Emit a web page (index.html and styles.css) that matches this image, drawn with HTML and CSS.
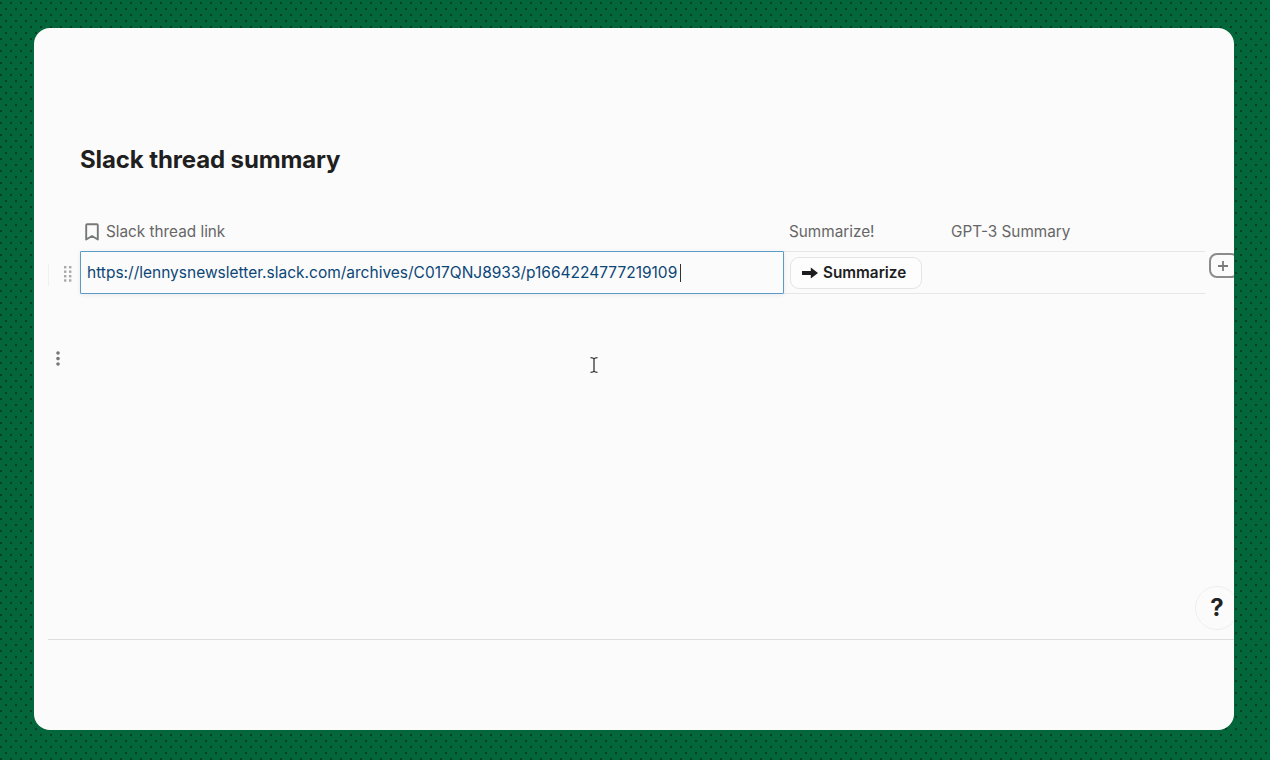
FILE: index.html
```html
<!DOCTYPE html>
<html lang="en">
<head>
<meta charset="utf-8">
<title>Slack thread summary</title>
<link rel="stylesheet" href="styles.css">
</head>
<body>
<main class="card">
  <section class="doc">
    <h1 class="title">Slack thread summary</h1>
    <div class="table">
      <div class="head">
        <div class="col col-link head-link">
          <svg class="bookmark" viewBox="0 0 14 18" width="14" height="18" aria-hidden="true"><path d="M2.2 1.2h9.6a1 1 0 0 1 1 1v14.3L7 13 1.2 16.5V2.2a1 1 0 0 1 1-1z" fill="none" stroke="#77787a" stroke-width="1.9" stroke-linejoin="round"/></svg>
          <span>Slack thread link</span>
        </div>
        <div class="col col-btn head-btn">Summarize!</div>
        <div class="col col-sum">GPT-3 Summary</div>
      </div>
      <div class="row">
        <div class="col col-link cell-link"><span class="url">https://lennysnewsletter.slack.com/archives/C017QNJ8933/p1664224777219109</span><span class="caret"></span></div>
        <div class="col col-btn cell-btn">
          <button class="btn" type="button"><svg class="arrow" viewBox="0 0 16 12" width="16" height="12" aria-hidden="true"><path d="M0 3.9h8.8V.4L16 6l-7.2 5.6V8.1H0z" fill="#1d1d1f"/></svg>Summarize</button>
        </div>
        <div class="col col-sum"></div>
      </div>
      <svg class="grip" viewBox="0 0 8 16" width="8" height="16" aria-hidden="true"><g fill="#a9a9a9"><rect x="0" y="0" width="2.4" height="2.4"/><rect x="5" y="0" width="2.4" height="2.4"/><rect x="0" y="4.5" width="2.4" height="2.4"/><rect x="5" y="4.5" width="2.4" height="2.4"/><rect x="0" y="9" width="2.4" height="2.4"/><rect x="5" y="9" width="2.4" height="2.4"/><rect x="0" y="13.3" width="2.4" height="2.4"/><rect x="5" y="13.3" width="2.4" height="2.4"/></g></svg>
      <span class="row-tick"></span>
    </div>
  </section>
  <div class="footer"></div>
  <div class="add" aria-hidden="true"><svg viewBox="0 0 12 12" width="12" height="12"><path d="M6 1v10M1 6h10" stroke="#7b7b7b" stroke-width="1.8" fill="none"/></svg></div>
  <svg class="kebab" viewBox="0 0 4 16" width="4" height="16" aria-hidden="true"><g fill="#777"><circle cx="2" cy="2" r="1.8"/><circle cx="2" cy="7.6" r="1.8"/><circle cx="2" cy="13" r="1.8"/></g></svg>
  <svg class="ibeam" viewBox="0 0 8 16" width="8" height="16" aria-hidden="true"><path d="M0.5 0.7c1.5 0 3 .3 3.5 1.3.5-1 2-1.3 3.5-1.3M4 2v12M0.5 15.3c1.5 0 3-.3 3.5-1.3.5 1 2 1.3 3.5 1.3" fill="none" stroke="#333" stroke-width="1.3"/></svg>
  <div class="help">?</div>
</main>
</body>
</html>
```

FILE: styles.css
```css
* { box-sizing: border-box; }
html, body { margin: 0; height: 100%; }
body {
  width: 1270px;
  height: 760px;
  overflow: hidden;
  padding: 28px 36px 30px 34px;
  font-family: Inter, "Liberation Sans", sans-serif;
  background-color: #04673b;
  background-image:
    radial-gradient(circle at 1px 1px, #02130b 0.6px, transparent 0.8px),
    radial-gradient(circle at 1px 1px, #02130b 0.6px, transparent 0.8px);
  background-size: 10px 12px, 10px 12px;
  background-position: 0 2px, 5px 8px;
}
.card {
  position: relative;
  width: 1200px;
  height: 702px;
  background: #fbfbfb;
  border-radius: 16px;
  overflow: hidden;
}
.doc { padding: 116px 29px 0 46px; height: 611px; }
.title {
  margin: 0;
  font-size: 24px;
  line-height: 32px;
  font-weight: 700;
  letter-spacing: -0.12px;
  color: #1f1f1f;
}
.table { position: relative; margin-top: 44px; }
.head {
  display: flex;
  height: 32px;
  font-size: 15.3px;
  line-height: 24px;
  color: #666666;
  border-bottom: 1px solid #e6e6e6;
}
.col-link { width: 704px; flex: none; }
.col-btn { width: 161px; flex: none; }
.col-sum { flex: 1; }
.head-link { display: flex; align-items: center; gap: 7px; padding: 0 0 8px 5px; }
.bookmark { flex: none; margin-top: 1px; }
.head-btn { padding-left: 5px; }
.head .col-sum { padding-left: 6px; }
.row {
  display: flex;
  height: 42px;
  border-bottom: 1px solid #e6e6e6;
}
.cell-link {
  display: flex;
  align-items: center;
  height: 43px;
  margin-top: -1px;
  padding-left: 6px;
  border: 1px solid #5a9bc8;
  border-radius: 1px;
  box-shadow: 0 1px 4px rgba(0, 0, 0, 0.08);
  background: #fbfbfb;
  font-size: 15.5px;
  color: #0b4677;
  position: relative;
  z-index: 1;
}
.url { white-space: nowrap; }
.caret { width: 1px; height: 18px; margin-left: 3px; background: #333; }
.cell-btn { display: flex; align-items: center; padding-left: 6px; }
.btn {
  display: flex;
  align-items: center;
  gap: 5px;
  width: 132px;
  height: 32px;
  padding: 0 0 0 11px;
  border: 1px solid #e4e4e4;
  border-radius: 9px;
  background: #fdfdfd;
  font-family: inherit;
  font-size: 15.3px;
  font-weight: 600;
  color: #1d1d1f;
}
.arrow { flex: none; }
.grip { position: absolute; left: -16px; top: 46px; }
.row-tick { position: absolute; left: -32px; top: 44px; width: 1px; height: 22px; background: #f0f0f0; }
.footer { margin-left: 14px; border-top: 1px solid #dedede; }
.add {
  position: absolute;
  left: 1175px;
  top: 225px;
  width: 30px;
  height: 25px;
  display: flex;
  align-items: center;
  padding-left: 6px;
  border: 2px solid #8b8b8b;
  border-radius: 8px;
  background: #fbfbfb;
}
.kebab { position: absolute; left: 22px; top: 323px; }
.ibeam { position: absolute; left: 556px; top: 329px; }
.help {
  position: absolute;
  left: 1161px;
  top: 558px;
  width: 44px;
  height: 44px;
  border: 1px solid #eeeeee;
  border-radius: 50%;
  background: #fbfbfb;
  text-align: center;
  font-size: 24px;
  line-height: 42px;
  font-weight: 700;
  color: #222;
}
```
